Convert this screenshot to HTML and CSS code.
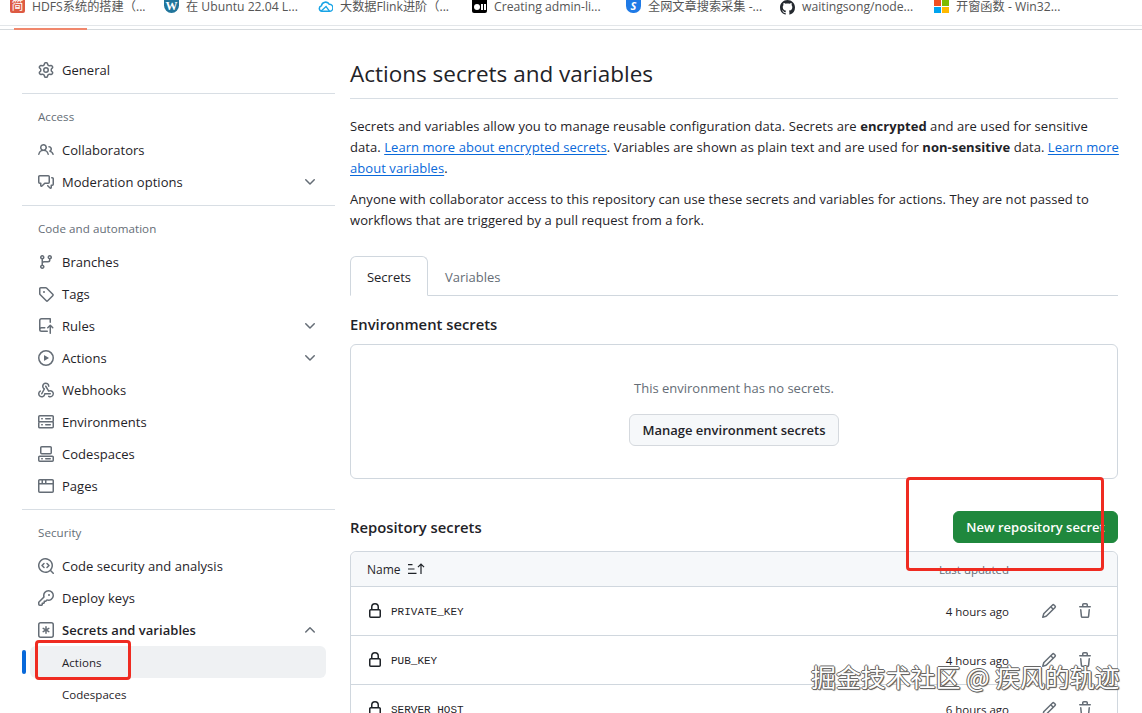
FILE: index.html
```html
<!DOCTYPE html>
<html lang="en">
<head>
<meta charset="utf-8">
<title>Actions secrets and variables</title>
<link rel="stylesheet" href="styles.css">
</head>
<body>
<svg class="sprite" aria-hidden="true">
  <symbol id="i-gear" viewBox="0 0 16 16"><path d="M8 0a8.2 8.2 0 0 1 .701.031C9.444.095 9.99.645 10.16 1.29l.288 1.107c.018.066.079.158.212.224.231.114.454.243.668.386.123.082.233.09.299.071l1.103-.303c.644-.176 1.392.021 1.82.63.27.385.506.792.704 1.218.315.675.111 1.422-.364 1.891l-.814.806c-.049.048-.098.147-.088.294.016.257.016.515 0 .772-.01.147.038.246.088.294l.814.806c.475.469.679 1.216.364 1.891a7.977 7.977 0 0 1-.704 1.217c-.428.61-1.176.807-1.82.63l-1.102-.302c-.067-.019-.177-.011-.3.071a5.909 5.909 0 0 1-.668.386c-.133.066-.194.158-.211.224l-.29 1.106c-.168.646-.715 1.196-1.458 1.26a8.006 8.006 0 0 1-1.402 0c-.743-.064-1.289-.614-1.458-1.26l-.289-1.106c-.018-.066-.079-.158-.212-.224a5.738 5.738 0 0 1-.668-.386c-.123-.082-.233-.09-.299-.071l-1.103.303c-.644.176-1.392-.021-1.82-.63a8.12 8.12 0 0 1-.704-1.218c-.315-.675-.111-1.422.363-1.891l.815-.806c.05-.048.098-.147.088-.294a6.214 6.214 0 0 1 0-.772c.01-.147-.038-.246-.088-.294l-.815-.806C.635 6.045.431 5.298.746 4.623a7.92 7.92 0 0 1 .704-1.217c.428-.61 1.176-.807 1.82-.63l1.102.302c.067.019.177.011.3-.071.214-.143.437-.272.668-.386.133-.066.194-.158.211-.224l.29-1.106C6.009.645 6.556.095 7.299.03 7.53.01 7.764 0 8 0Zm-.571 1.525c-.036.003-.108.036-.137.146l-.289 1.105c-.147.561-.549.967-.998 1.189-.173.086-.34.183-.5.29-.417.278-.97.423-1.529.27l-1.103-.303c-.109-.03-.175.016-.195.045-.22.312-.412.644-.573.99-.014.031-.021.11.059.19l.815.806c.411.406.562.957.53 1.456a4.709 4.709 0 0 0 0 .582c.032.499-.119 1.05-.53 1.456l-.815.806c-.081.08-.073.159-.059.19.162.346.353.677.573.989.02.03.085.076.195.046l1.102-.303c.56-.153 1.113-.008 1.53.27.161.107.328.204.501.29.447.222.85.629.997 1.189l.289 1.105c.029.109.101.143.137.146a6.6 6.6 0 0 0 1.142 0c.036-.003.108-.036.137-.146l.289-1.105c.147-.561.549-.967.998-1.189.173-.086.34-.183.5-.29.417-.278.97-.423 1.529-.27l1.103.303c.109.029.175-.016.195-.045.22-.313.411-.644.573-.99.014-.031.021-.11-.059-.19l-.815-.806c-.411-.406-.562-.957-.53-1.456a4.709 4.709 0 0 0 0-.582c-.032-.499.119-1.05.53-1.456l.815-.806c.081-.08.073-.159.059-.19a6.464 6.464 0 0 0-.573-.989c-.02-.03-.085-.076-.195-.046l-1.102.303c-.56.153-1.113.008-1.53-.27a4.44 4.44 0 0 0-.501-.29c-.447-.222-.85-.629-.997-1.189l-.289-1.105c-.029-.11-.101-.143-.137-.146a6.6 6.6 0 0 0-1.142 0ZM11 8a3 3 0 1 1-6 0 3 3 0 0 1 6 0ZM9.5 8a1.5 1.5 0 1 0-3.001.001A1.5 1.5 0 0 0 9.5 8Z"/></symbol>
  <symbol id="i-people" viewBox="0 0 16 16"><path d="M2 5.5a3.5 3.5 0 1 1 5.898 2.549 5.508 5.508 0 0 1 3.034 4.084.75.75 0 1 1-1.482.235 4 4 0 0 0-7.9 0 .75.75 0 0 1-1.482-.236A5.507 5.507 0 0 1 3.102 8.05 3.493 3.493 0 0 1 2 5.5ZM11 4a3.001 3.001 0 0 1 2.22 5.018 5.01 5.01 0 0 1 2.56 3.012.749.749 0 0 1-.885.954.752.752 0 0 1-.549-.514 3.507 3.507 0 0 0-2.522-2.372.75.75 0 0 1-.574-.73v-.352a.75.75 0 0 1 .416-.672A1.5 1.5 0 0 0 11 5.5.75.75 0 0 1 11 4Zm-5.5-.5a2 2 0 1 0-.001 3.999A2 2 0 0 0 5.5 3.5Z"/></symbol>
  <symbol id="i-comment" viewBox="0 0 16 16"><path d="M1.75 1h8.5c.966 0 1.75.784 1.75 1.75v5.5A1.75 1.75 0 0 1 10.25 10H7.061l-2.574 2.573A1.458 1.458 0 0 1 2 11.543V10h-.25A1.75 1.75 0 0 1 0 8.25v-5.5C0 1.784.784 1 1.75 1ZM1.5 2.75v5.5c0 .138.112.25.25.25h1a.75.75 0 0 1 .75.75v2.19l2.72-2.72a.749.749 0 0 1 .53-.22h3.5a.25.25 0 0 0 .25-.25v-5.5a.25.25 0 0 0-.25-.25h-8.5a.25.25 0 0 0-.25.25Zm13 2a.25.25 0 0 0-.25-.25h-.5a.75.75 0 0 1 0-1.5h.5c.966 0 1.75.784 1.75 1.75v5.5A1.75 1.75 0 0 1 14.25 12H14v1.543a1.458 1.458 0 0 1-2.487 1.03L9.22 12.28a.749.749 0 0 1 .326-1.275.749.749 0 0 1 .734.215l2.22 2.22v-2.19a.75.75 0 0 1 .75-.75h1a.25.25 0 0 0 .25-.25Z"/></symbol>
  <symbol id="i-branch" viewBox="0 0 16 16"><path d="M9.5 3.25a2.25 2.25 0 1 1 3 2.122V6A2.5 2.5 0 0 1 10 8.5H6a1 1 0 0 0-1 1v1.128a2.251 2.251 0 1 1-1.5 0V5.372a2.25 2.25 0 1 1 1.5 0v1.836A2.493 2.493 0 0 1 6 7h4a1 1 0 0 0 1-1v-.628A2.25 2.25 0 0 1 9.5 3.25Zm-6 0a.75.75 0 1 0 1.5 0 .75.75 0 0 0-1.5 0Zm8.25-.75a.75.75 0 1 0 0 1.5.75.75 0 0 0 0-1.5ZM4.25 12a.75.75 0 1 0 0 1.5.75.75 0 0 0 0-1.5Z"/></symbol>
  <symbol id="i-tag" viewBox="0 0 16 16"><path d="M1 7.775V2.75C1 1.784 1.784 1 2.75 1h5.025c.464 0 .91.184 1.238.513l6.25 6.25a1.75 1.75 0 0 1 0 2.474l-5.026 5.026a1.75 1.75 0 0 1-2.474 0l-6.25-6.25A1.752 1.752 0 0 1 1 7.775Zm1.5 0c0 .066.026.13.073.177l6.25 6.25a.25.25 0 0 0 .354 0l5.025-5.025a.25.25 0 0 0 0-.354l-6.25-6.25a.25.25 0 0 0-.177-.073H2.75a.25.25 0 0 0-.25.25ZM6 5a1 1 0 1 1 0 2 1 1 0 0 1 0-2Z"/></symbol>
  <symbol id="i-rules" viewBox="0 0 16 16"><path d="M1 2.5A2.5 2.5 0 0 1 3.5 0h8.75a.75.75 0 0 1 .75.75v3.5a.75.75 0 0 1-1.5 0V1.5h-8a1 1 0 0 0-1 1v6.708A2.493 2.493 0 0 1 3.5 9h3.25a.75.75 0 0 1 0 1.5H3.5a1 1 0 0 0 0 2h5.75a.75.75 0 0 1 0 1.5H3.5A2.5 2.5 0 0 1 1 11.5Zm13.23 7.79h-.001l-1.224-1.224v6.184a.75.75 0 0 1-1.5 0V9.066L10.28 10.29a.75.75 0 0 1-1.06-1.061l2.505-2.504a.75.75 0 0 1 1.06 0L15.29 9.23a.751.751 0 0 1-.018 1.042.751.751 0 0 1-1.042.018Z"/></symbol>
  <symbol id="i-play" viewBox="0 0 16 16"><path d="M8 0a8 8 0 1 1 0 16A8 8 0 0 1 8 0ZM1.5 8a6.5 6.5 0 1 0 13 0 6.5 6.5 0 0 0-13 0Zm4.879-2.773 4.264 2.559a.25.25 0 0 1 0 .428l-4.264 2.559A.25.25 0 0 1 6 10.559V5.442a.25.25 0 0 1 .379-.215Z"/></symbol>
  <symbol id="i-webhook" viewBox="0 0 16 16"><path d="M5.5 4.25a2.25 2.25 0 0 1 4.5 0 .75.75 0 0 0 1.5 0 3.75 3.75 0 1 0-6.14 2.889l-2.272 4.258a.75.75 0 0 0 1.324.706L7 7.25a.75.75 0 0 0-.309-1.015A2.25 2.25 0 0 1 5.5 4.25Z"/><path d="M7.364 3.607a.75.75 0 0 1 1.03.257l2.608 4.349a3.75 3.75 0 1 1-.628 6.785.75.75 0 0 1 .752-1.299 2.25 2.25 0 1 0-.033-3.88.75.75 0 0 1-1.03-.256L7.107 4.636a.75.75 0 0 1 .257-1.03Z"/><path d="M2.9 8.776A.75.75 0 0 1 2.625 9.8 2.25 2.25 0 1 0 6 11.75a.75.75 0 0 1 .75-.751h5.5a.75.75 0 0 1 0 1.5H7.425a3.751 3.751 0 1 1-5.55-3.998.75.75 0 0 1 1.024.274Z"/></symbol>
  <symbol id="i-server" viewBox="0 0 16 16"><path d="M1.75 1h12.5c.966 0 1.75.784 1.75 1.75v4c0 .372-.116.717-.314 1 .198.283.314.628.314 1v4a1.75 1.75 0 0 1-1.75 1.75H1.75A1.75 1.75 0 0 1 0 13.25v-4c0-.372.116-.717.314-1a1.739 1.739 0 0 1-.314-1v-4C0 1.784.784 1 1.75 1ZM1.5 2.75v4c0 .138.112.25.25.25h12.5a.25.25 0 0 0 .25-.25v-4a.25.25 0 0 0-.25-.25H1.75a.25.25 0 0 0-.25.25Zm.25 5.75a.25.25 0 0 0-.25.25v4c0 .138.112.25.25.25h12.5a.25.25 0 0 0 .25-.25v-4a.25.25 0 0 0-.25-.25ZM7 4.75A.75.75 0 0 1 7.75 4h4.5a.75.75 0 0 1 0 1.5h-4.5A.75.75 0 0 1 7 4.75ZM7.75 10h4.5a.75.75 0 0 1 0 1.5h-4.5a.75.75 0 0 1 0-1.5ZM3 4.75A.75.75 0 0 1 3.75 4h.5a.75.75 0 0 1 0 1.5h-.5A.75.75 0 0 1 3 4.75ZM3.75 10h.5a.75.75 0 0 1 0 1.5h-.5a.75.75 0 0 1 0-1.5Z"/></symbol>
  <symbol id="i-codespaces" viewBox="0 0 16 16"><path d="M0 11.25c0-.966.784-1.75 1.75-1.75h12.5c.966 0 1.75.784 1.75 1.75v3A1.75 1.75 0 0 1 14.25 16H1.75A1.75 1.75 0 0 1 0 14.25Zm2-9.5C2 .784 2.784 0 3.75 0h8.5C13.216 0 14 .784 14 1.75v5a1.75 1.75 0 0 1-1.75 1.75h-8.5A1.75 1.75 0 0 1 2 6.75Zm1.75-.25a.25.25 0 0 0-.25.25v5c0 .138.112.25.25.25h8.5a.25.25 0 0 0 .25-.25v-5a.25.25 0 0 0-.25-.25Zm-2 9.5a.25.25 0 0 0-.25.25v3c0 .138.112.25.25.25h12.5a.25.25 0 0 0 .25-.25v-3a.25.25 0 0 0-.25-.25Z"/><path d="M7 12.75a.75.75 0 0 1 .75-.75h4.5a.75.75 0 0 1 0 1.5h-4.5a.75.75 0 0 1-.75-.75Zm-4 0a.75.75 0 0 1 .75-.75h.5a.75.75 0 0 1 0 1.5h-.5a.75.75 0 0 1-.75-.75Z"/></symbol>
  <symbol id="i-browser" viewBox="0 0 16 16"><path d="M0 2.75C0 1.784.784 1 1.75 1h12.5c.966 0 1.75.784 1.75 1.75v10.5A1.75 1.75 0 0 1 14.25 15H1.75A1.75 1.75 0 0 1 0 13.25ZM14.5 6.5h-13v6.75c0 .138.112.25.25.25h12.5a.25.25 0 0 0 .25-.25Zm-13-3.75V5h2V2.5H1.75a.25.25 0 0 0-.25.25ZM5 2.5V5h2V2.5Zm3.5 0V5h6V2.75a.25.25 0 0 0-.25-.25Z"/></symbol>
  <symbol id="i-scan" viewBox="0 0 16 16"><path d="M8.47 4.97a.75.75 0 0 0 0 1.06L9.94 7.5 8.47 8.97a.75.75 0 1 0 1.06 1.06l2-2a.75.75 0 0 0 0-1.06l-2-2a.75.75 0 0 0-1.06 0ZM6.53 6.03a.75.75 0 0 0-1.06-1.06l-2 2a.75.75 0 0 0 0 1.06l2 2a.75.75 0 1 0 1.06-1.06L5.06 7.5l1.47-1.47Z"/><path d="M12.246 13.307a7.501 7.501 0 1 1 1.06-1.06l2.474 2.473a.75.75 0 1 1-1.06 1.06ZM1.5 7.5a6.002 6.002 0 0 0 3.608 5.504 6.002 6.002 0 0 0 6.486-1.117.748.748 0 0 1 .292-.293A6 6 0 1 0 1.5 7.5Z"/></symbol>
  <symbol id="i-key" viewBox="0 0 16 16"><path d="M10.5 0a5.499 5.499 0 1 1-1.288 10.848l-.932.932a.749.749 0 0 1-.53.22H7v.75a.749.749 0 0 1-.22.53l-.5.5a.749.749 0 0 1-.53.22H5v.75a.749.749 0 0 1-.22.53l-.5.5a.749.749 0 0 1-.53.22h-2A1.75 1.75 0 0 1 0 14.25v-2c0-.199.079-.389.22-.53l4.932-4.932A5.5 5.5 0 0 1 10.5 0Zm-4 5.5c-.001.431.069.86.205 1.269a.75.75 0 0 1-.181.768L1.5 12.56v1.69c0 .138.112.25.25.25h1.69l.06-.06v-1.19a.75.75 0 0 1 .75-.75h1.19l.06-.06v-1.19a.75.75 0 0 1 .75-.75h1.19l1.023-1.025a.75.75 0 0 1 .768-.18A4 4 0 1 0 6.5 5.5ZM11 6a1 1 0 1 1 0-2 1 1 0 0 1 0 2Z"/></symbol>
  <symbol id="i-asterisk" viewBox="0 0 16 16"><path d="M0 2.75A2.75 2.75 0 0 1 2.75 0h10.5A2.75 2.75 0 0 1 16 2.75v10.5A2.75 2.75 0 0 1 13.25 16H2.75A2.75 2.75 0 0 1 0 13.25Zm2.75-1.25c-.69 0-1.25.56-1.25 1.25v10.5c0 .69.56 1.25 1.25 1.25h10.5c.69 0 1.25-.56 1.25-1.25V2.75c0-.69-.56-1.25-1.25-1.25Z"/><path d="M8 4a.75.75 0 0 1 .75.75V6.7l1.69-.975a.75.75 0 0 1 .75 1.3L9.5 8l1.69.976a.75.75 0 0 1-.75 1.298L8.75 9.3v1.951a.75.75 0 0 1-1.5 0V9.299l-1.69.976a.75.75 0 0 1-.75-1.3L6.5 8l-1.69-.975a.75.75 0 0 1 .75-1.3l1.69.976V4.75A.75.75 0 0 1 8 4Z"/></symbol>
  <symbol id="i-lock" viewBox="0 0 16 16"><path d="M4 4a4 4 0 0 1 8 0v2h.25c.966 0 1.75.784 1.75 1.75v5.5A1.75 1.75 0 0 1 12.25 15h-8.5A1.75 1.75 0 0 1 2 13.25v-5.5C2 6.784 2.784 6 3.75 6H4Zm8.25 3.5h-8.5a.25.25 0 0 0-.25.25v5.5c0 .138.112.25.25.25h8.5a.25.25 0 0 0 .25-.25v-5.5a.25.25 0 0 0-.25-.25ZM10.5 6V4a2.5 2.5 0 1 0-5 0v2Z"/></symbol>
  <symbol id="i-pencil" viewBox="0 0 16 16"><path d="M11.013 1.427a1.75 1.75 0 0 1 2.474 0l1.086 1.086a1.75 1.75 0 0 1 0 2.474l-8.61 8.61c-.21.21-.47.364-.756.445l-3.251.93a.75.75 0 0 1-.927-.928l.929-3.25c.081-.286.235-.547.445-.758l8.61-8.61Zm.176 4.823L9.75 4.81l-6.286 6.287a.253.253 0 0 0-.064.108l-.558 1.953 1.953-.558a.253.253 0 0 0 .108-.064Zm1.238-3.763a.25.25 0 0 0-.354 0L10.811 3.75l1.439 1.44 1.263-1.263a.25.25 0 0 0 0-.354Z"/></symbol>
  <symbol id="i-trash" viewBox="0 0 16 16"><path d="M11 1.75V3h2.25a.75.75 0 0 1 0 1.5H2.75a.75.75 0 0 1 0-1.5H5V1.75C5 .784 5.784 0 6.75 0h2.5C10.216 0 11 .784 11 1.75ZM4.496 6.675l.66 6.6a.25.25 0 0 0 .249.225h5.19a.25.25 0 0 0 .249-.225l.66-6.6a.75.75 0 0 1 1.492.149l-.66 6.6A1.748 1.748 0 0 1 10.595 15h-5.19a1.75 1.75 0 0 1-1.741-1.575l-.66-6.6a.75.75 0 1 1 1.492-.15ZM6.5 1.75V3h3V1.75a.25.25 0 0 0-.25-.25h-2.5a.25.25 0 0 0-.25.25Z"/></symbol>
  <symbol id="i-down" viewBox="0 0 16 16"><path d="M12.78 5.22a.749.749 0 0 1 0 1.06l-4.25 4.25a.749.749 0 0 1-1.06 0L3.22 6.28a.749.749 0 1 1 1.06-1.06L8 8.939l3.72-3.719a.749.749 0 0 1 1.06 0Z"/></symbol>
  <symbol id="i-up" viewBox="0 0 16 16"><path d="M3.22 10.53a.749.749 0 0 1 0-1.06l4.25-4.25a.749.749 0 0 1 1.06 0l4.25 4.25a.749.749 0 1 1-1.06 1.06L8 6.811 4.28 10.53a.749.749 0 0 1-1.06 0Z"/></symbol>
  <symbol id="i-sort" viewBox="0 0 18 12"><path d="M1 1h4.5v1.2H1zM1 5.4h6.5v1.2H1zM1 9.8h8.5V11H1zM13.4 11V2.6l-2 2-.9-.9L14 .3l3.5 3.4-.9.9-2-2V11z"/></symbol>
  <symbol id="i-github" viewBox="0 0 16 16"><path d="M8 0c4.42 0 8 3.58 8 8a8.013 8.013 0 0 1-5.45 7.59c-.4.08-.55-.17-.55-.38 0-.27.01-1.13.01-2.2 0-.75-.25-1.23-.54-1.48 1.78-.2 3.65-.88 3.65-3.95 0-.88-.31-1.59-.82-2.15.08-.2.36-1.02-.08-2.12 0 0-.67-.22-2.2.82-.64-.18-1.32-.27-2-.27-.68 0-1.36.09-2 .27-1.53-1.03-2.2-.82-2.2-.82-.44 1.1-.16 1.92-.08 2.12-.51.56-.82 1.28-.82 2.15 0 3.06 1.86 3.75 3.64 3.95-.23.2-.44.55-.51 1.07-.46.21-1.61.55-2.33-.66-.15-.24-.6-.83-1.23-.82-.67.01-.27.38.01.53.34.19.73.9.82 1.13.16.45.68 1.31 2.69.94 0 .67.01 1.3.01 1.49 0 .21-.15.45-.55.38A7.995 7.995 0 0 1 0 8c0-4.42 3.58-8 8-8Z"/></symbol>
</svg>

<div class="page">
  <div class="bookmarks">
    <a class="bm"><span class="fav fav-jian">简</span><span class="bm-text">HDFS系统的搭建（...</span></a>
    <a class="bm"><span class="fav fav-wp">W</span><span class="bm-text">在 Ubuntu 22.04 L...</span></a>
    <a class="bm"><svg class="fav" viewBox="0 0 16 13"><path class="cloud" d="M4.2 11.6a3 3 0 0 1-.5-5.9 4.5 4.5 0 0 1 8.4-1.5 3.7 3.7 0 0 1 .2 7.4z"/><path class="cloud2" d="M3.4 11.4 8.6 6.6l3.6 4.8"/></svg><span class="bm-text">大数据Flink进阶（...</span></a>
    <a class="bm"><span class="fav fav-black"><i class="dot"></i><i class="bar"></i><i class="bar"></i></span><span class="bm-text">Creating admin-li...</span></a>
    <a class="bm"><span class="fav fav-s">S</span><span class="bm-text">全网文章搜索采集 -...</span></a>
    <a class="bm"><svg class="fav fav-gh"><use href="#i-github"/></svg><span class="bm-text">waitingsong/node...</span></a>
    <a class="bm"><span class="fav fav-ms"><i class="r"></i><i class="g"></i><i class="b"></i><i class="y"></i></span><span class="bm-text">开窗函数 - Win32...</span></a>
  </div>
  <div class="load-line"><span class="progress"></span></div>

  <div class="layout">
    <nav class="sidebar">
      <a class="item"><svg class="ic"><use href="#i-gear"/></svg><span>General</span></a>
      <hr class="rule">
      <div class="group-title">Access</div>
      <a class="item"><svg class="ic"><use href="#i-people"/></svg><span>Collaborators</span></a>
      <a class="item"><svg class="ic"><use href="#i-comment"/></svg><span>Moderation options</span><svg class="chev"><use href="#i-down"/></svg></a>
      <hr class="rule">
      <div class="group-title">Code and automation</div>
      <a class="item"><svg class="ic"><use href="#i-branch"/></svg><span>Branches</span></a>
      <a class="item"><svg class="ic"><use href="#i-tag"/></svg><span>Tags</span></a>
      <a class="item"><svg class="ic"><use href="#i-rules"/></svg><span>Rules</span><svg class="chev"><use href="#i-down"/></svg></a>
      <a class="item"><svg class="ic"><use href="#i-play"/></svg><span>Actions</span><svg class="chev"><use href="#i-down"/></svg></a>
      <a class="item"><svg class="ic"><use href="#i-webhook"/></svg><span>Webhooks</span></a>
      <a class="item"><svg class="ic"><use href="#i-server"/></svg><span>Environments</span></a>
      <a class="item"><svg class="ic"><use href="#i-codespaces"/></svg><span>Codespaces</span></a>
      <a class="item"><svg class="ic"><use href="#i-browser"/></svg><span>Pages</span></a>
      <hr class="rule">
      <div class="group-title">Security</div>
      <a class="item"><svg class="ic"><use href="#i-scan"/></svg><span>Code security and analysis</span></a>
      <a class="item"><svg class="ic"><use href="#i-key"/></svg><span>Deploy keys</span></a>
      <a class="item item-open"><svg class="ic"><use href="#i-asterisk"/></svg><span>Secrets and variables</span><svg class="chev"><use href="#i-up"/></svg></a>
      <a class="item sub active"><span>Actions</span></a>
      <a class="item sub"><span>Codespaces</span></a>
    </nav>

    <main class="main">
      <h1 class="title">Actions secrets and variables</h1>
      <p class="para para-first">Secrets and variables allow you to manage reusable configuration data. Secrets are <b>encrypted</b> and are used for sensitive data. <a class="link">Learn more about encrypted secrets</a>. Variables are shown as plain text and are used for <b>non-sensitive</b> data. <a class="link">Learn more about variables</a>.</p>
      <p class="para">Anyone with collaborator access to this repository can use these secrets and variables for actions. They are not passed to workflows that are triggered by a pull request from a fork.</p>

      <div class="tabs">
        <a class="tab tab-on">Secrets</a>
        <a class="tab">Variables</a>
      </div>

      <h2 class="section section-env">Environment secrets</h2>
      <div class="empty">
        <p class="empty-text">This environment has no secrets.</p>
        <a class="btn">Manage environment secrets</a>
      </div>

      <div class="repo-head">
        <h2 class="section">Repository secrets</h2>
        <a class="btn btn-green">New repository secret</a>
      </div>

      <div class="table">
        <div class="thead">
          <span class="th-name">Name</span>
          <svg class="sort"><use href="#i-sort"/></svg>
          <span class="th-updated">Last updated</span>
        </div>
        <div class="row">
          <svg class="ic-dark"><use href="#i-lock"/></svg><code class="key">PRIVATE_KEY</code>
          <span class="when">4 hours ago</span>
          <svg class="act"><use href="#i-pencil"/></svg><svg class="act"><use href="#i-trash"/></svg>
        </div>
        <div class="row">
          <svg class="ic-dark"><use href="#i-lock"/></svg><code class="key">PUB_KEY</code>
          <span class="when">4 hours ago</span>
          <svg class="act"><use href="#i-pencil"/></svg><svg class="act"><use href="#i-trash"/></svg>
        </div>
        <div class="row">
          <svg class="ic-dark"><use href="#i-lock"/></svg><code class="key">SERVER_HOST</code>
          <span class="when">6 hours ago</span>
          <svg class="act"><use href="#i-pencil"/></svg><svg class="act"><use href="#i-trash"/></svg>
        </div>
      </div>
    </main>
  </div>

  <div class="mark mark-side"></div>
  <div class="mark mark-main"></div>
  <div class="watermark">掘金技术社区 @ 疾风的轨迹</div>
</div>
</body>
</html>
```

FILE: styles.css
```css
* { box-sizing: border-box; }
html, body { margin: 0; padding: 0; background: #fff; }
body {
  font-family: "Open Sans", "Noto Sans CJK SC", sans-serif;
  font-size: 13px;
  color: #1f2328;
}
.sprite { position: absolute; width: 0; height: 0; overflow: hidden; }
svg { fill: currentColor; flex: none; }

.page { position: relative; width: 1142px; height: 713px; overflow: hidden; }

/* bookmarks bar */
.bookmarks {
  display: flex;
  height: 26px;
  border-bottom: 1px solid #e3e6e9;
}
.bm {
  display: flex;
  align-items: flex-start;
  width: 154px;
  padding-left: 10px;
  gap: 7px;
  color: #555;
  line-height: 13px;
  white-space: nowrap;
}
.bm-text { font-size: 12.2px; }
.fav { display: block; width: 15px; height: 13px; flex: none; overflow: hidden; }
.fav-jian {
  background: #dd5a43;
  color: #fff;
  font-size: 12px;
  line-height: 12px;
  text-align: center;
  border-radius: 0 0 2px 2px;
}
.fav-wp {
  background: #21759b;
  color: #fff;
  font-family: "Liberation Serif", serif;
  font-weight: 700;
  font-size: 12px;
  line-height: 12px;
  text-align: center;
  border-radius: 0 0 8px 8px;
}
.cloud { fill: #fff; stroke: #19a4e6; stroke-width: 1.6; }
.cloud2 { fill: none; stroke: #19a4e6; stroke-width: 1.4; }
.fav-black {
  display: flex;
  align-items: center;
  justify-content: center;
  gap: 1px;
  background: #000;
  border-radius: 0 0 2px 2px;
}
.fav-black .dot { width: 6px; height: 6px; background: #fff; border-radius: 50%; }
.fav-black .bar { width: 2px; height: 6px; background: #fff; }
.fav-s {
  background: #1f7ae6;
  color: #fff;
  font-style: italic;
  font-weight: 700;
  font-size: 11px;
  line-height: 11px;
  text-align: center;
  border-radius: 0 0 7px 7px;
}
.fav-gh { height: 15px; color: #24292f; }
.fav-ms {
  display: grid;
  grid-template-columns: 7px 7px;
  grid-template-rows: 6px 6px;
  gap: 1px;
}
.fav-ms .r { background: #f25022; }
.fav-ms .g { background: #7fba00; }
.fav-ms .b { background: #00a4ef; }
.fav-ms .y { background: #ffb900; }

.load-line {
  position: relative;
  height: 4px;
  border-bottom: 1px solid #d6dadd;
}
.progress {
  position: absolute;
  left: 14px;
  top: 2px;
  width: 73px;
  height: 2px;
  background: #f0876c;
}

/* layout */
.layout { display: flex; align-items: flex-start; padding: 24px 24px 0 22px; }
.sidebar { width: 313px; flex: none; margin-right: 15px; letter-spacing: .04px; }
.main { flex: 1; min-width: 0; }

/* sidebar */
.rule { height: 1px; margin: 7px 0 0; border: 0; background: #d8dee4; }
.group-title {
  height: 40px;
  padding: 5px 0 0 16px;
  display: flex;
  align-items: center;
  font-size: 11.6px;
  font-weight: 500;
  color: #656d76;
}
.item {
  position: relative;
  display: flex;
  align-items: center;
  height: 32px;
  width: 296px;
  margin-left: 8px;
  padding-left: 8px;
  color: #1f2328;
}
.ic { width: 16px; height: 16px; margin-right: 8px; color: #656d76; }
.chev { width: 16px; height: 16px; margin-left: auto; margin-right: 8px; color: #656d76; }
.item-open { font-weight: 600; }
.sub { padding-left: 32px; font-size: 11.5px; }
.active { background: #eff1f3; border-radius: 6px; }
.active::before {
  content: "";
  position: absolute;
  left: -8px;
  top: 4px;
  width: 4px;
  height: 24px;
  background: #0969da;
  border-radius: 2px;
}

/* main */
.title {
  margin: 0;
  height: 45px;
  padding-bottom: 6px;
  display: flex;
  align-items: center;
  font-size: 22.5px;
  font-weight: 400;
  border-bottom: 1px solid #d8dee4;
}
.para { margin: 10px -3px 0 0; line-height: 21px; letter-spacing: .06px; }
.para-first { margin-top: 17px; }
.link { color: #0969da; text-decoration: underline; text-underline-offset: 2px; }

.tabs {
  display: flex;
  align-items: flex-end;
  margin-top: 25px;
  height: 40px;
  border-bottom: 1px solid #d0d7de;
}
.tab {
  display: flex;
  align-items: center;
  justify-content: center;
  height: 40px;
  padding: 2px 17px 0;
  margin-bottom: -1px;
  color: #656d76;
}
.tab-on {
  width: 78px;
  padding: 2px 0 0;
  color: #1f2328;
  background: #fff;
  border: 1px solid #d0d7de;
  border-bottom-color: #fff;
  border-radius: 6px 6px 0 0;
}

.section { margin: 0; font-size: 14.8px; font-weight: 600; line-height: 24px; }
.section-env { padding-top: 16px; margin-bottom: 8px; }
.empty {
  display: flex;
  flex-direction: column;
  align-items: center;
  height: 135px;
  padding-top: 33px;
  border: 1px solid #d0d7de;
  border-radius: 6px;
}
.empty-text { margin: 0 0 16px; line-height: 20px; color: #656d76; }
.btn {
  display: inline-flex;
  align-items: center;
  justify-content: center;
  height: 32px;
  padding: 0 12px;
  font-weight: 600;
  background: #f6f8fa;
  border: 1px solid #d5d9de;
  border-radius: 6px;
  white-space: nowrap;
}
.btn-green { width: 165px; color: #fff; background: #1f883d; border-color: #1f883d; }
.repo-head {
  display: flex;
  align-items: center;
  justify-content: space-between;
  margin-top: 32px;
  margin-bottom: 8px;
}

.table { border: 1px solid #d0d7de; border-radius: 6px 6px 0 0; }
.thead {
  display: flex;
  align-items: center;
  height: 35px;
  padding: 0 108px 0 16px;
  background: #f6f8fa;
  border-bottom: 1px solid #d0d7de;
  border-radius: 6px 6px 0 0;
  font-size: 12px;
}
.sort { width: 18px; height: 12px; margin-left: 6px; color: #1f2328; }
.th-updated { margin-left: auto; color: #656d76; font-size: 11.5px; }
.row {
  display: flex;
  align-items: center;
  height: 49px;
  padding: 0 24px 0 16px;
  border-bottom: 1px solid #d0d7de;
  font-size: 11.5px;
}
.ic-dark { width: 16px; height: 16px; margin-right: 8px; color: #1f2328; }
.key { padding-top: 2px; font-family: "Liberation Mono", monospace; font-size: 11px; }
.when { margin-left: auto; margin-right: 32px; }
.act { width: 16px; height: 16px; color: #656d76; }
.act + .act { margin-left: 20px; }

/* annotations over the screenshot */
.mark {
  position: absolute;
  border: 3px solid #ef2b21;
  border-radius: 4px;
}
.mark-side { left: 35px; top: 640px; width: 96px; height: 40px; }
.mark-main { left: 906px; top: 477px; width: 198px; height: 94px; }
.watermark {
  position: absolute;
  left: 811px;
  top: 658px;
  font-family: "Noto Sans CJK SC", sans-serif;
  font-size: 24.9px;
  line-height: 36px;
  white-space: nowrap;
  color: #fff;
  text-shadow: 1px 0 0 #666, -1px 0 0 #666, 0 1px 0 #666, 0 -1px 0 #666, 1px 1px 1px #444;
}
```
